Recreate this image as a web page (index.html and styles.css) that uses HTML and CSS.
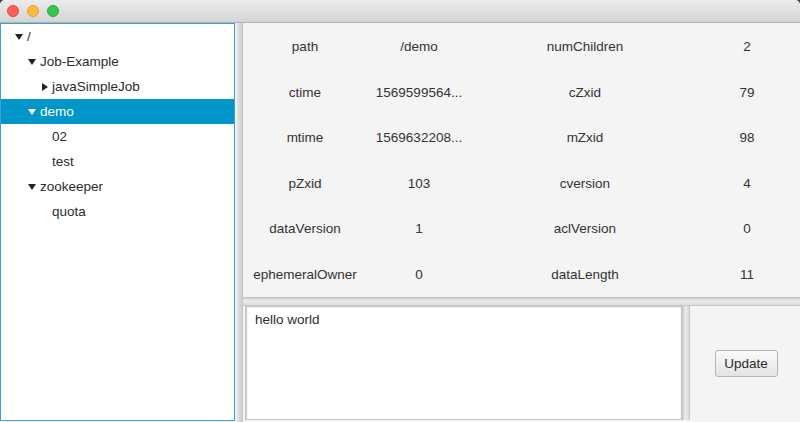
FILE: index.html
```html
<!DOCTYPE html>
<html>
<head>
<meta charset="utf-8">
<link rel="stylesheet" href="styles.css">
</head>
<body>
<div class="window">
  <div class="titlebar">
    <span class="light red"></span>
    <span class="light yellow"></span>
    <span class="light green"></span>
  </div>
  <div class="main">
    <div class="tree">
      <div class="row lvl0"><span class="arrow expanded"></span><span class="label">/</span></div>
      <div class="row lvl1"><span class="arrow expanded"></span><span class="label">Job-Example</span></div>
      <div class="row lvl2"><span class="arrow collapsed"></span><span class="label">javaSimpleJob</span></div>
      <div class="row lvl1 selected"><span class="arrow expanded"></span><span class="label">demo</span></div>
      <div class="row lvl2"><span class="arrow"></span><span class="label">02</span></div>
      <div class="row lvl2"><span class="arrow"></span><span class="label">test</span></div>
      <div class="row lvl1"><span class="arrow expanded"></span><span class="label">zookeeper</span></div>
      <div class="row lvl2"><span class="arrow"></span><span class="label">quota</span></div>
    </div>
    <div class="vdivider"></div>
    <div class="details">
      <div class="grid">
        <div class="cell">path</div><div class="cell">/demo</div><div class="cell">numChildren</div><div class="cell">2</div>
        <div class="cell">ctime</div><div class="cell">1569599564...</div><div class="cell">cZxid</div><div class="cell">79</div>
        <div class="cell">mtime</div><div class="cell">1569632208...</div><div class="cell">mZxid</div><div class="cell">98</div>
        <div class="cell">pZxid</div><div class="cell">103</div><div class="cell">cversion</div><div class="cell">4</div>
        <div class="cell">dataVersion</div><div class="cell">1</div><div class="cell">aclVersion</div><div class="cell">0</div>
        <div class="cell">ephemeralOwner</div><div class="cell">0</div><div class="cell">dataLength</div><div class="cell">11</div>
      </div>
      <div class="hdivider"></div>
      <div class="bottom">
        <div class="textarea">hello world</div>
        <div class="vdivider small"></div>
        <div class="buttonpane"><button class="btn">Update</button></div>
      </div>
    </div>
  </div>
</div>
</body>
</html>
```
FILE: styles.css
```css
* { box-sizing: border-box; }
html, body { margin: 0; padding: 0; }
body {
  width: 800px;
  height: 422px;
  overflow: hidden;
  background: #3a3a3a;
  font-family: "Liberation Sans", Arial, sans-serif;
  font-size: 13.5px;
  color: #333;
}
.window {
  width: 800px;
  height: 422px;
  display: flex;
  flex-direction: column;
  background: #f4f4f4;
  border-radius: 5px 5px 0 0;
  overflow: hidden;
}
.titlebar {
  height: 23px;
  flex: none;
  background: linear-gradient(#ececec, #d4d4d4);
  border-bottom: 1px solid #b1b1b1;
  display: flex;
  align-items: center;
  gap: 8px;
  padding-left: 7px;
  padding-bottom: 1px;
}
.light {
  width: 12px;
  height: 12px;
  border-radius: 50%;
}
.red { background: #fc605b; border: 1px solid #de4640; }
.yellow { background: #fdbc40; border: 1px solid #de9f34; }
.green { background: #34c84a; border: 1px solid #27aa35; }
.main {
  flex: 1;
  display: flex;
  min-height: 0;
}
.tree {
  width: 235px;
  flex: none;
  background: #fff;
  border: 1px solid #3d9fd2;
  margin-bottom: 1px;
}
.row {
  height: 25px;
  display: flex;
  align-items: center;
  color: #2b2b2b;
  white-space: nowrap;
}
.row.lvl0 { padding-left: 12px; }
.row.lvl1 { padding-left: 25px; }
.row.lvl2 { padding-left: 37px; }
.row.selected {
  background: #0096c9;
  color: #fff;
}
.arrow {
  width: 14px;
  flex: none;
  display: flex;
  align-items: center;
}
.arrow.expanded::before {
  content: "";
  display: block;
  margin-left: 2px;
  border-left: 4px solid transparent;
  border-right: 4px solid transparent;
  border-top: 6px solid #222;
}
.row.selected .arrow.expanded::before { border-top-color: #fff; }
.arrow.collapsed::before {
  content: "";
  display: block;
  margin-left: 4px;
  border-top: 4px solid transparent;
  border-bottom: 4px solid transparent;
  border-left: 6px solid #222;
}
.vdivider {
  width: 8px;
  flex: none;
  background: linear-gradient(90deg, #f6f6f6, #d9d9d9 60%, #cfcfcf);
  border-right: 1px solid #c4c4c4;
}
.vdivider.small {
  background: linear-gradient(90deg, #d0d0d0, #ececec 40%, #dadada);
  border-left: 1px solid #c8c8c8;
  border-right: 1px solid #c8c8c8;
}
.details {
  flex: 1;
  display: flex;
  flex-direction: column;
  background: #f4f4f4;
  min-width: 0;
}
.grid {
  height: 274px;
  flex: none;
  display: grid;
  grid-template-columns: 124px 104px 228px 96px;
  grid-template-rows: repeat(6, 1fr);
  padding-top: 1px;
}
.cell {
  display: flex;
  align-items: center;
  justify-content: center;
  color: #333;
  white-space: nowrap;
}
.hdivider {
  height: 9px;
  flex: none;
  background: linear-gradient(#cfcfcf, #ececec 40%, #dcdcdc);
  border-top: 1px solid #c4c4c4;
  border-bottom: 1px solid #c8c8c8;
}
.bottom {
  flex: 1;
  display: flex;
  min-height: 0;
  padding-bottom: 2px;
  background: #f4f4f4;
}
.textarea {
  flex: 1;
  margin-left: 2px;
  background: #fff;
  border: 1px solid #c5c5c5;
  border-left: 2px solid #c9c9c9;
  box-shadow: inset 0 1px 2px rgba(0,0,0,0.08);
  padding: 5px 8px;
  color: #2b2b2b;
}
.buttonpane {
  width: 110px;
  flex: none;
  display: flex;
  align-items: center;
  justify-content: center;
  padding-right: 2px;
}
.btn {
  font-family: "Liberation Sans", Arial, sans-serif;
  font-size: 13.5px;
  color: #2b2b2b;
  height: 27px;
  width: 63px;
  padding: 0;
  border: 1px solid #b4b4b4;
  border-radius: 3px;
  background: linear-gradient(#fafafa, #e4e4e4);
  margin-top: 0;
  margin-left: 4px;
}
```
